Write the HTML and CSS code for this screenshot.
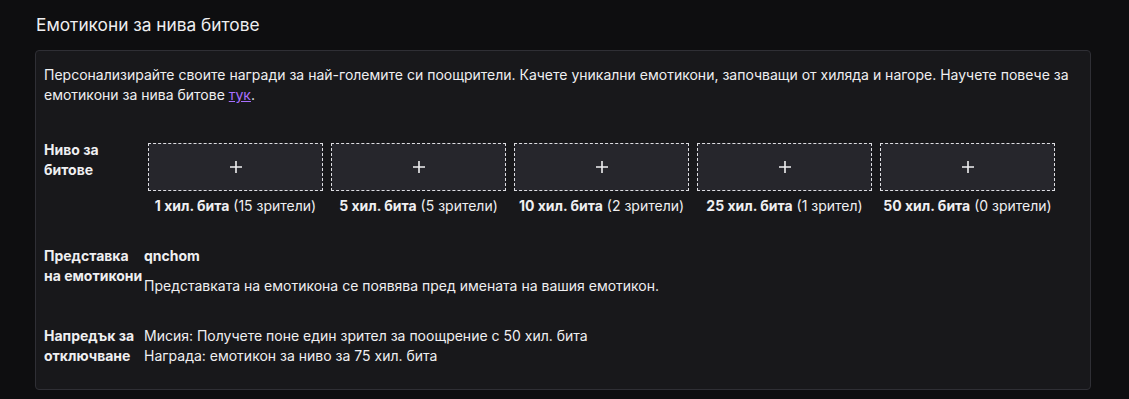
FILE: index.html
```html
<!DOCTYPE html>
<html lang="bg">
<head>
  <meta charset="UTF-8">
  <meta name="viewport" content="width=device-width, initial-scale=1.0">
  <title>Емотикони за нива битове</title>
  <link rel="stylesheet" href="styles.css">
</head>
<body>

  <div class="section">
    <h2 class="section-title">Емотикони за нива битове</h2>

    <div class="card">
      <p class="intro">Персонализирайте своите награди за най-големите си поощрители. Качете уникални емотикони, започващи от хиляда и нагоре. Научете повече за емотикони за нива битове <a href="#">тук</a>.</p>

      <div class="row row-tiers">
        <div class="label">Ниво за битове</div>
        <div class="tiers">
          <div class="tier">
            <button class="tile"><svg class="plus" width="14" height="14" viewBox="0 0 14 14"><path d="M7 1v12M1 7h12"/></svg></button>
            <div class="caption"><b>1 хил. бита</b> (15 зрители)</div>
          </div>
          <div class="tier">
            <button class="tile"><svg class="plus" width="14" height="14" viewBox="0 0 14 14"><path d="M7 1v12M1 7h12"/></svg></button>
            <div class="caption"><b>5 хил. бита</b> (5 зрители)</div>
          </div>
          <div class="tier">
            <button class="tile"><svg class="plus" width="14" height="14" viewBox="0 0 14 14"><path d="M7 1v12M1 7h12"/></svg></button>
            <div class="caption"><b>10 хил. бита</b> (2 зрители)</div>
          </div>
          <div class="tier">
            <button class="tile"><svg class="plus" width="14" height="14" viewBox="0 0 14 14"><path d="M7 1v12M1 7h12"/></svg></button>
            <div class="caption"><b>25 хил. бита</b> (1 зрител)</div>
          </div>
          <div class="tier">
            <button class="tile"><svg class="plus" width="14" height="14" viewBox="0 0 14 14"><path d="M7 1v12M1 7h12"/></svg></button>
            <div class="caption"><b>50 хил. бита</b> (0 зрители)</div>
          </div>
        </div>
      </div>

      <div class="row row-prefix">
        <div class="label">Представка на емотикони</div>
        <div class="value">
          <div class="prefix">qnchom</div>
          <div class="hint">Представката на емотикона се появява пред имената на вашия емотикон.</div>
        </div>
      </div>

      <div class="row row-unlock">
        <div class="label">Напредък за отключване</div>
        <div class="value">
          <div>Мисия: Получете поне един зрител за поощрение с 50 хил. бита</div>
          <div>Награда: емотикон за ниво за 75 хил. бита</div>
        </div>
      </div>
    </div>
  </div>

</body>
</html>
```

FILE: styles.css
```css
body {
  font-family: Inter, 'Noto Sans', sans-serif;
  background-color: #0e0e10;
  color: #efeff1;
  margin: 0;
  padding: 0;
}

.section {
  padding: 13px 35px 0 35px;
  width: 1056px;
}

.section-title {
  font-size: 17.3px;
  font-weight: 400;
  line-height: 24px;
  margin: 0 0 13px 1px;
}

.card {
  background-color: #18181b;
  border: 1px solid #2f2f35;
  border-radius: 4px;
  padding: 14px 8px 23px 8px;
  font-size: 14px;
  line-height: 20px;
}

.intro {
  margin: 0;
}

.intro a {
  color: #a970ff;
}

.row {
  display: flex;
}

.label {
  width: 100px;
  flex-shrink: 0;
  font-size: 14px;
  font-weight: 700;
  line-height: 20px;
}

.row-tiers {
  margin-top: 35px;
}

.tiers {
  display: flex;
  margin-top: 3px;
}

.tier {
  width: 175px;
  margin: 0 4px;
  text-align: center;
}

.tile {
  display: flex;
  align-items: center;
  justify-content: center;
  width: 175px;
  height: 48px;
  background-color: #26262c;
  border: 1px dashed #dedee3;
  padding: 0;
  cursor: pointer;
}

.plus {
  stroke: #efeff1;
  stroke-width: 1.6;
  fill: none;
}

.caption {
  margin-top: 6px;
  font-size: 14px;
  line-height: 18px;
}

.caption b {
  font-weight: 700;
}

.row-prefix {
  margin-top: 31px;
}

.prefix {
  font-weight: 700;
}

.hint {
  margin-top: 10px;
}

.row-unlock {
  margin-top: 30px;
}
```
